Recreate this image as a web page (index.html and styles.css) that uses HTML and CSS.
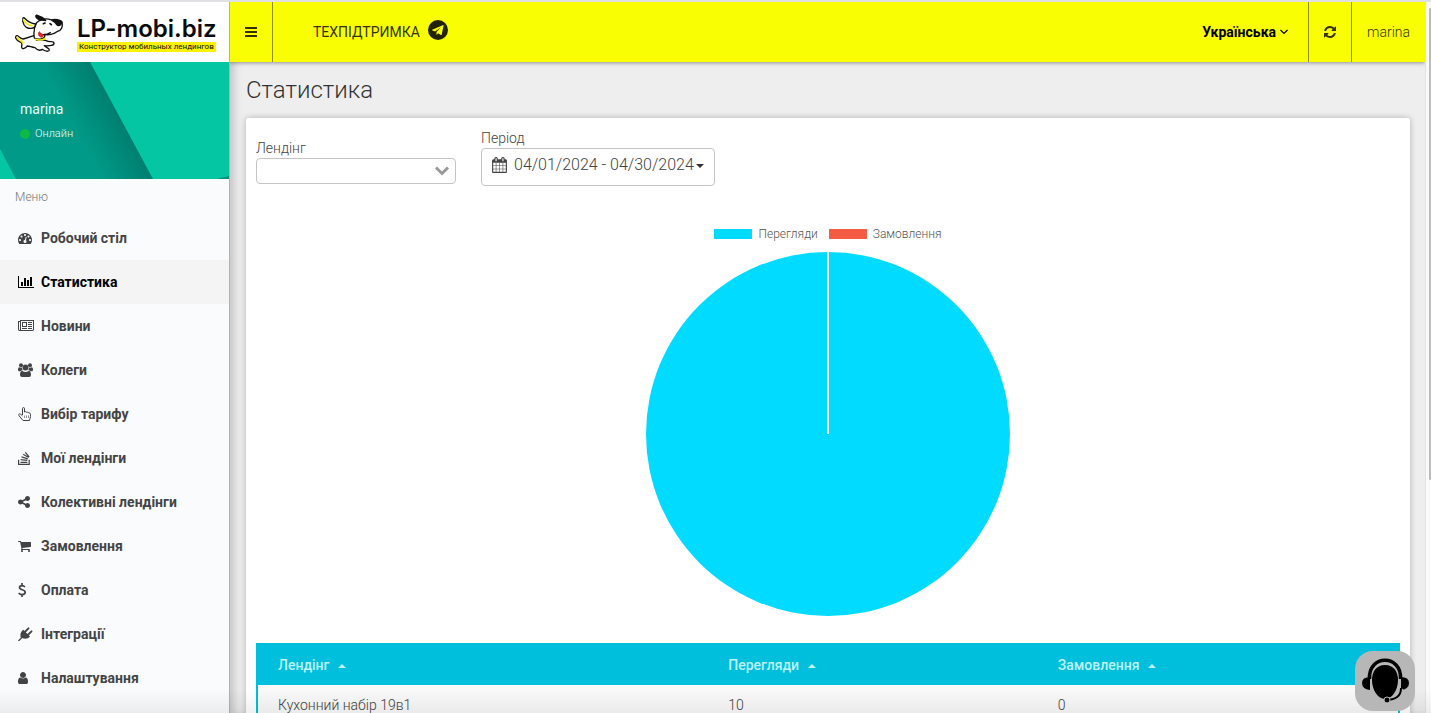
FILE: index.html
```html
<!DOCTYPE html>
<html lang="uk">
<head>
<meta charset="utf-8">
<title>Статистика</title>
<link rel="stylesheet" href="styles.css">
</head>
<body>
<div class="tabstrip"></div>
<div class="app">
  <aside class="sidebar">
    <a class="logo" href="#">
      <svg class="logo-dog" width="50" height="40" viewBox="0 0 150 120" fill="#fff" stroke="#111" stroke-width="4" stroke-linecap="round" stroke-linejoin="round">
        <path d="M31 75C20 74 16 64 12 65C4 67 8 80 22 84C31 88 25 94 26 100C28 108 38 102 43 96C51 96 55 100 66 101C72 108 80 111 88 106C95 112 108 114 109 108C110 102 98 101 94 95C111 97 124 94 123 87C122 80 110 86 99 80C85 75 78 78 70 78L65 64Z"/>
        <path d="M64 72C61 54 64 38 71 26C80 16 98 12 113 17L147 25C150 38 145 50 134 52C123 61 105 64 94 61C101 73 79 80 64 72Z"/>
        <path d="M68 30C55 28 42 20 33 11C26 10 28 32 40 40C49 45 60 44 65 39Z"/>
        <path d="M13 69C12 78 29 79 30 88M31 17C37 27 44 34 57 35M68 76Q82 81 96 74" fill="none" stroke="#f1ec00" stroke-width="5"/>
        <path d="M79 17C68 12 66 5 71 3C79 8 94 9 98 20ZM116 18C123 15 143 16 147 24C144 34 136 38 131 32C128 25 121 23 116 18Z" fill="#111"/>
        <path d="M78 57C85 64 100 64 112 56" fill="none"/>
        <path d="M79 54L89 62C93 68 86 73 81 68C74 63 76 59 79 54Z" fill="#e8261b" stroke="#e8261b" stroke-width="2"/>
        <path d="M91 29L96 27M111 29L115 32" stroke-width="5"/>
      </svg>
      <span class="logo-text">
        <span class="logo-name">LP-mobi.biz</span>
        <span class="logo-tag">Конструктор мобильных лендингов</span>
      </span>
    </a>
    <div class="profile">
      <svg class="profile-art" viewBox="0 0 229 117" preserveAspectRatio="none" aria-hidden="true">
        <defs>
          <linearGradient id="edge" gradientUnits="userSpaceOnUse" x1="82" y1="82" x2="122" y2="60">
            <stop offset="0" stop-color="#009b88"/>
            <stop offset="1" stop-color="#007f70"/>
          </linearGradient>
        </defs>
        <path d="M0 0H229V117H0Z" fill="#04c6a3"/>
        <path d="M0 0H90L153 117H16L0 87Z" fill="url(#edge)"/>
        <path d="M217 117L229 114V117Z" fill="#008f7d"/>
      </svg>
      <div class="profile-name">marina</div>
      <div class="profile-status"><span class="dot"></span>Онлайн</div>
    </div>
    <div class="menu-title">Меню</div>
    <nav class="menu">
      <a class="item" href="#"><svg class="icon" viewBox="0 0 2048 1792"><path d="M384 1152q0-53-37.5-90.5t-90.5-37.5-90.5 37.5-37.5 90.5 37.5 90.5 90.5 37.5 90.5-37.5 37.5-90.5zm192-448q0-53-37.5-90.5t-90.5-37.5-90.5 37.5-37.5 90.5 37.5 90.5 90.5 37.5 90.5-37.5 37.5-90.5zm428 481l101-382q6-26-7.5-48.5t-38.5-29.5-48 6.5-30 39.5l-101 382q-60 5-107 43.5t-63 98.5q-20 77 20 146t117 89 146-20 89-117q16-60-6-117t-72-91zm660-33q0-53-37.5-90.5t-90.5-37.5-90.5 37.5-37.5 90.5 37.5 90.5 90.5 37.5 90.5-37.5 37.5-90.5zm-640-640q0-53-37.5-90.5t-90.5-37.5-90.5 37.5-37.5 90.5 37.5 90.5 90.5 37.5 90.5-37.5 37.5-90.5zm448 192q0-53-37.5-90.5t-90.5-37.5-90.5 37.5-37.5 90.5 37.5 90.5 90.5 37.5 90.5-37.5 37.5-90.5zm320 448q0 261-141 483-19 29-54 29h-1402q-35 0-54-29-141-221-141-483 0-182 71-348t191-286 286-191 348-71 348 71 286 191 191 286 71 348z"/></svg>Робочий стіл</a>
      <a class="item active" href="#" aria-current="page"><svg class="icon" viewBox="0 0 2048 1792"><path d="M640 896v512h-256v-512h256zm384-512v1024h-256v-1024h256zm1024 1152v128h-2048v-1536h128v1408h1920zm-640-896v768h-256v-768h256zm384-384v1152h-256v-1152h256z"/></svg>Статистика</a>
      <a class="item" href="#"><svg class="icon" viewBox="0 0 2048 1792"><path d="M1024 512h-384v384h384v-384zm128 640v128h-640v-128h640zm0-768v640h-640v-640h640zm640 768v128h-512v-128h512zm0-256v128h-512v-128h512zm0-256v128h-512v-128h512zm0-256v128h-512v-128h512zm-1536 960v-960h-128v960q0 26 19 45t45 19 45-19 19-45zm1664 0v-1088h-1536v1088q0 33-11 64h1483q26 0 45-19t19-45zm128-1216v1216q0 80-56 136t-136 56h-1664q-80 0-136-56t-56-136v-1088h256v-128h1792z"/></svg>Новини</a>
      <a class="item" href="#"><svg class="icon" viewBox="0 0 16 14"><circle cx="3" cy="2.2" r="2"/><circle cx="12" cy="2.2" r="2"/><circle cx="7.500" cy="4.500" r="3"/><path d="M0 7.200C0 5 .5 4.200 1.200 4.200 2.500 5 3.500 4.600 4 4.400 3.900 5.600 4.300 6.500 4.900 7.100 3.800 7.200 3 7.700 2.500 8.200H1.200Q0 8.200 0 7.200ZM15 7.200C15 5 14.500 4.200 13.800 4.200 12.500 5 11.500 4.600 11 4.400 11.100 5.600 10.700 6.500 10.100 7.100 11.200 7.200 12 7.700 12.500 8.200H13.800Q15 8.200 15 7.200ZM4.300 7.700C6 9.300 9 9.300 10.700 7.700 12.500 7.700 13 10 13 11.900Q13 14 11 14H4Q2 14 2 11.900C2 10 2.500 7.700 4.300 7.700Z"/></svg>Колеги</a>
      <a class="item" href="#"><svg class="icon" viewBox="0 0 16 14"><path d="M4.500 8V1.800Q4.500.5 5.500.5T6.500 1.800V5Q8 4.300 8.600 5.200 10 4.600 10.500 5.800 12.500 5.600 12.500 7.500V9.500L11.500 13.500H5L1 8.700Q.2 7.300 1.500 6.900 2.600 6.700 4.500 9" fill="none" stroke="currentColor"/><path d="M6.500 8.500V11M8.500 8.500V11M10.500 8.500V11" fill="none" stroke="currentColor" stroke-width=".6"/></svg>Вибір тарифу</a>
      <a class="item" href="#"><svg class="icon" viewBox="0 0 16 14"><path d="M.6 8.800V13.400H11.200V8.800M2.500 11.400H9.300M2.700 8.600L9.400 9.300M3.500 5.900L9.800 7.900M5.200 3.200L10.600 6.600M7.300 1.300L11.200 6" fill="none" stroke="currentColor" stroke-width="1.200"/></svg>Мої лендінги</a>
      <a class="item" href="#"><svg class="icon" viewBox="128 0 2048 1792"><path d="M1344 1024q133 0 226.500 93.500t93.500 226.500-93.500 226.500-226.500 93.500-226.500-93.500-93.500-226.500q0-12 2-34l-360-180q-92 86-218 86-133 0-226.500-93.500t-93.500-226.500 93.500-226.500 226.500-93.500q126 0 218 86l360-180q-2-22-2-34 0-133 93.500-226.500t226.500-93.500 226.500 93.500 93.500 226.500-93.500 226.500-226.500 93.500q-126 0-218-86l-360 180q2 22 2 34t-2 34l360 180q92-86 218-86z"/></svg>Колективні лендінги</a>
      <a class="item" href="#"><svg class="icon" viewBox="64 0 2048 1792"><path d="M704 1536q0 52-38 90t-90 38-90-38-38-90 38-90 90-38 90 38 38 90zm896 0q0 52-38 90t-90 38-90-38-38-90 38-90 90-38 90 38 38 90zm128-1088v512q0 24-16.500 42.500t-40.500 21.500l-1044 122q13 60 13 70 0 16-24 64h920q26 0 45 19t19 45-19 45-45 19h-1024q-26 0-45-19t-19-45q0-11 8-31.500t16-36 21.500-40 15.500-29.500l-177-823h-204q-26 0-45-19t-19-45 19-45 45-19h256q16 0 28.500 6.500t19.500 15.500 13 24.500 8 26 5.500 29.500 4.500 26h1201q26 0 45 19t19 45z"/></svg>Замовлення</a>
      <a class="item" href="#"><svg class="icon" viewBox="0 0 16 14"><path d="M7 4Q5.800 2.600 4 2.600 1.500 2.700 1.500 4.500C1.500 7.300 7.200 6.200 7.200 9.300 7.200 11 5.700 11.600 4 11.600Q2 11.600.7 10M4 0V2.600M4 11.600V14" fill="none" stroke="currentColor" stroke-width="1.700"/></svg>Оплата</a>
      <a class="item" href="#"><svg class="icon" viewBox="0 0 16 14"><path d="M5.200 2.800L12 9.600C10 12 6.500 12.300 4.300 11L1.400 13.900Q.6 14.200 0 13.400L2.900 10.400C1.700 8 2.600 5 5.200 2.800Z"/><path d="M6.800 5L10.500 1.300M9.800 8L13.500 4.300" stroke="currentColor" stroke-width="1.900" stroke-linecap="round"/></svg>Інтеграції</a>
      <a class="item" href="#"><svg class="icon" viewBox="256 0 2048 1792"><path d="M1536 1399q0 109-62.500 187t-150.500 78h-854q-88 0-150.500-78t-62.500-187q0-85 8.500-160.500t31.500-152 58.500-131 94-89 134.500-34.500q131 128 313 128t313-128q76 0 134.500 34.500t94 89 58.500 131 31.500 152 8.500 160.500zm-256-887q0 159-112.500 271.500t-271.500 112.500-271.500-112.500-112.500-271.500 112.500-271.500 271.500-112.500 271.500 112.500 112.500 271.500z"/></svg>Налаштування</a>
    </nav>
  </aside>

  <div class="page">
    <header class="topbar">
      <button class="toggle" type="button" aria-label="Меню">
        <svg width="12" height="14" viewBox="0 0 12 14"><path d="M0 2h12v2H0zM0 6h12v2H0zM0 10h12v2H0z" fill="currentColor"/></svg>
      </button>
      <a class="support" href="#">ТЕХПІДТРИМКА
        <svg width="20" height="20" viewBox="0 0 20 20"><circle cx="10" cy="10" r="10" fill="#222205"/><path d="M15.300 5L4.200 9.800Q3.800 10.300 4.500 10.600L7.200 11.500L13 7.300L8.500 12V15L10.200 13.300L12.700 15Q13.500 15.300 13.700 14.500L15.600 5.500Q15.700 5 15.300 5Z" fill="#fafe02"/></svg>
      </a>
      <button class="lang" type="button">Українська
        <svg width="8" height="6" viewBox="0 0 8 6"><path d="M.5 1L4 4.500L7.500 1" fill="none" stroke="currentColor" stroke-width="1.200"/></svg>
      </button>
      <button class="refresh" type="button" aria-label="Оновити">
        <svg width="14" height="14" viewBox="0 0 1792 1792"><path fill="currentColor" d="M1639 1056q0 5-1 7-64 268-268 434.500t-478 166.500q-146 0-282.500-55t-243.500-157l-129 129q-19 19-45 19t-45-19-19-45v-448q0-26 19-45t45-19h448q26 0 45 19t19 45-19 45l-137 137q71 66 161 102t187 36q134 0 250-65t186-179q11-17 53-117 8-23 30-23h192q13 0 22.500 9.500t9.500 22.500zm25-800v448q0 26-19 45t-45 19h-448q-26 0-45-19t-19-45 19-45l138-138q-148-137-349-137-134 0-250 65t-186 179q-11 17-53 117-8 23-30 23h-199q-13 0-22.500-9.500t-9.500-22.500v-7q65-268 270-434.500t480-166.500q146 0 284 55.500t245 156.500l130-129q19-19 45-19t45 19 19 45z"/></svg>
      </button>
      <a class="account" href="#">marina</a>
    </header>

    <main class="content">
      <h1 class="title">Статистика</h1>
      <section class="card">
        <div class="filters">
          <div class="field landing">
            <label for="landing">Лендінг</label>
            <div class="select-wrap">
              <select id="landing"><option></option></select>
              <svg class="chevron" width="14" height="10" viewBox="0 0 14 10"><path d="M1 1.500L7 7.500L13 1.500" fill="none" stroke="#999" stroke-width="3"/></svg>
            </div>
          </div>
          <div class="field">
            <label for="period">Період</label>
            <button class="period" id="period" type="button">
              <svg width="15" height="16" viewBox="64 0 1664 1792"><path fill="currentColor" d="M192 1664h288v-288h-288v288zm352 0h320v-288h-320v288zm-352-352h288v-320h-288v320zm352 0h320v-320h-320v320zm-352-384h288v-288h-288v288zm736 736h320v-288h-320v288zm-384-736h320v-288h-320v288zm768 736h288v-288h-288v288zm-384-352h320v-320h-320v320zm-352-864v-288q0-13-9.500-22.500t-22.500-9.500h-64q-13 0-22.500 9.500t-9.500 22.500v288q0 13 9.500 22.500t22.500 9.500h64q13 0 22.500-9.500t9.500-22.500zm736 864h288v-320h-288v320zm-384-384h320v-288h-320v288zm384 0h288v-288h-288v288zm32-480v-288q0-13-9.500-22.500t-22.500-9.500h-64q-13 0-22.500 9.500t-9.500 22.500v288q0 13 9.500 22.500t22.500 9.500h64q13 0 22.500-9.500t9.500-22.500zm384-64v1280q0 52-38 90t-90 38h-1408q-52 0-90-38t-38-90v-1280q0-52 38-90t90-38h128v-96q0-66 47-113t113-47h64q66 0 113 47t47 113v96h384v-96q0-66 47-113t113-47h64q66 0 113 47t47 113v96h128q52 0 90 38t38 90z"/></svg>
              <span class="range">04/01/2024 - 04/30/2024</span><span class="caret"></span>
            </button>
          </div>
        </div>

        <figure class="chart">
          <figcaption class="legend">
            <span class="key"><span class="swatch views"></span>Перегляди</span>
            <span class="key"><span class="swatch orders"></span>Замовлення</span>
          </figcaption>
          <svg class="pie" viewBox="0 0 364 364" role="img" aria-label="Перегляди 10, Замовлення 0"><circle cx="182" cy="182" r="182" fill="#00dbff"/><path d="M182 0V182" stroke="#fff" stroke-width="2"/></svg>
        </figure>

        <table class="data">
          <colgroup><col class="c1"><col class="c2"><col></colgroup>
          <thead><tr>
            <th scope="col">Лендінг<span class="sort"></span></th>
            <th scope="col">Перегляди<span class="sort"></span></th>
            <th scope="col">Замовлення<span class="sort"></span></th>
          </tr></thead>
          <tbody><tr><td>Кухонний набір 19в1</td><td>10</td><td>0</td></tr></tbody>
        </table>
      </section>
    </main>
  </div>
  <div class="scrollbar"><div class="thumb"></div></div>
</div>
<div class="fade"></div>
<button class="help" type="button" aria-label="Підтримка">
  <svg width="60" height="60" viewBox="0 0 60 60">
    <path d="M30 14C39 14 43 21 43 29C43 39 37 48 30 48S17 39 17 29C17 21 21 14 30 14Z"/>
    <path d="M14.500 28C13 3 47 3 45.500 28" fill="none" stroke="#000" stroke-width="3.500"/>
    <path d="M15 26V39Q7 38 7 32T15 26ZM46 26V39Q54 38 54 32T46 26Z"/>
    <path d="M45.500 38C46 46 40 49 33 49" fill="none" stroke="#b7b7b7" stroke-width="5"/>
    <path d="M46 37C46 46 40 48 33 49" fill="none" stroke="#000" stroke-width="2"/>
    <circle cx="32" cy="49" r="3" stroke="#b7b7b7"/>
  </svg>
</button>
</body>
</html>
```
FILE: styles.css
```css
* { box-sizing: border-box; }

body {
  margin: 0;
  height: 100vh;
  overflow: hidden;
  display: flex;
  flex-direction: column;
  background: #eee;
  color: #444;
  font: 300 14px/20px Roboto, "Liberation Sans", sans-serif;
}

a { color: inherit; text-decoration: none; }
button { border: 0; background: none; padding: 0; color: inherit; font: inherit; }

.tabstrip { height: 2px; flex: none; background: #e0dfe4; }
.app { display: flex; flex: 1; min-height: 0; }

.sidebar {
  width: 230px;
  flex: none;
  position: relative;
  z-index: 2;
  overflow: hidden;
  background: #fafbfd;
  border-right: 1px solid #b0b0b8;
}
.page { flex: 1; min-width: 0; overflow: hidden; box-shadow: inset 8px 0 8px -4px #c4c4c4; }

.logo {
  display: flex;
  align-items: center;
  gap: 14px;
  height: 60px;
  padding: 4px 0 0 13px;
  background: #fff;
  color: #0a0a0a;
}
.logo-text { display: flex; flex-direction: column; align-items: flex-start; }
.logo-name { font: 600 24px/26px Inter, Roboto, sans-serif; }
.logo-tag {
  padding: 0 2px;
  background: #faf200;
  font: 400 8px/10px Roboto, sans-serif;
  white-space: nowrap;
}

.profile { position: relative; height: 117px; padding: 37px 20px 0; color: #e4fffa; }
.profile-art { position: absolute; inset: 0; width: 100%; height: 100%; }
.profile-name { position: relative; font-weight: 400; }
.profile-status {
  position: relative;
  display: flex;
  align-items: center;
  gap: 5px;
  margin-top: 5px;
  font-size: 11px;
}
.dot { width: 10px; height: 10px; border-radius: 50%; background: #0cba45; }

.menu-title { height: 37px; padding: 8px 15px; font-size: 12px; color: #777; }
.item {
  display: flex;
  align-items: center;
  gap: 7px;
  height: 44px;
  padding: 0 18px;
  font-weight: 700;
}
.item.active { background: #f4f4f4; color: #000; }
.icon { width: 16px; height: 14px; flex: none; fill: currentColor; }

.topbar {
  position: relative;
  display: flex;
  height: 60px;
  background: #fafe02;
  color: #333300;
  box-shadow: 0 1px 4px rgba(0, 0, 0, 0.4);
}
.toggle { display: grid; place-items: center; width: 43px; border-right: 1px solid #8f9200; }
.support { display: flex; align-items: center; gap: 8px; margin: 0 auto 0 40px; font-weight: 400; }
.support svg { margin-bottom: 4px; }
.lang { display: flex; align-items: center; gap: 4px; padding: 0 20px; font-weight: 700; color: #000; }
.refresh { display: grid; place-items: center; width: 43px; border-left: 1px solid #8f9200; }
.account { display: flex; align-items: center; padding: 0 15px; border-left: 1px solid #8f9200; }

.content { padding: 14px 15px 0 16px; }
.title { margin: 0 0 14px; font: 300 24px/28px Roboto, sans-serif; color: #333; }
.card {
  padding: 10px;
  min-height: 620px;
  background: #fff;
  border-radius: 3px;
  box-shadow: 0 0 6px rgba(0, 0, 0, 0.25);
}

.filters { display: flex; gap: 25px; height: 98px; }
.field label { display: block; }
.landing { width: 200px; padding-top: 10px; }
.select-wrap { display: grid; align-items: center; }
.select-wrap > * { grid-area: 1 / 1; }
.select-wrap select {
  appearance: none;
  width: 100%;
  height: 26px;
  padding: 0 8px;
  border: 1px solid #c4c4c4;
  border-radius: 4px;
  background: #fff;
  font: inherit;
}
.chevron { justify-self: end; margin-right: 7px; pointer-events: none; }
.period {
  display: flex;
  align-items: flex-start;
  height: 38px;
  padding: 8px 10px;
  border: 1px solid #c4c4c4;
  border-radius: 4px;
  font-size: 16px;
}
.range { margin: -2px 2px 0 7px; }
.caret {
  margin-top: 7px;
  border: 4px solid transparent;
  border-top-color: #333;
  border-bottom: 0;
}

.chart { display: flex; flex-direction: column; align-items: center; margin: 0; }
.legend { display: flex; gap: 11px; height: 26px; padding-bottom: 10px; }
.key { display: flex; align-items: center; gap: 6px; font-size: 12px; line-height: 16px; color: #555; }
.swatch { width: 38px; height: 10px; }
.views { background: #00dbff; }
.orders { background: #f45b42; }
.pie { width: 364px; height: 364px; }

.data {
  width: 100%;
  margin-top: 27px;
  border-collapse: separate;
  border-spacing: 0;
  table-layout: fixed;
  border: solid #00bfdc;
  border-width: 0 2px;
}
.c1 { width: 39.5%; }
.c2 { width: 28.9%; }
.data th {
  height: 42px;
  padding: 2px 20px 0;
  background: #00bfdc;
  color: #bdf3fb;
  text-align: left;
  font-weight: 500;
}
.data td { height: 42px; padding: 0 20px 2px; background: #f9f9f9; }
.sort {
  display: inline-block;
  margin-left: 9px;
  vertical-align: middle;
  border: 4px solid transparent;
  border-bottom-color: #bdf3fb;
  border-top: 0;
}

.scrollbar { width: 6px; flex: none; padding-top: 6px; background: #fafafa; border-left: 1px solid #e2e2e2; }
.thumb { width: 2px; height: 67%; margin-left: auto; background: #bbb; border-radius: 2px; }

.fade {
  position: fixed;
  inset: auto 0 0;
  height: 24px;
  z-index: 3;
  pointer-events: none;
  background: linear-gradient(transparent, rgba(0, 0, 0, 0.06));
}
.help {
  position: fixed;
  right: 16px;
  bottom: 2px;
  z-index: 4;
  width: 60px;
  height: 60px;
  border-radius: 18px;
  background: #b7b7b7;
}
```
